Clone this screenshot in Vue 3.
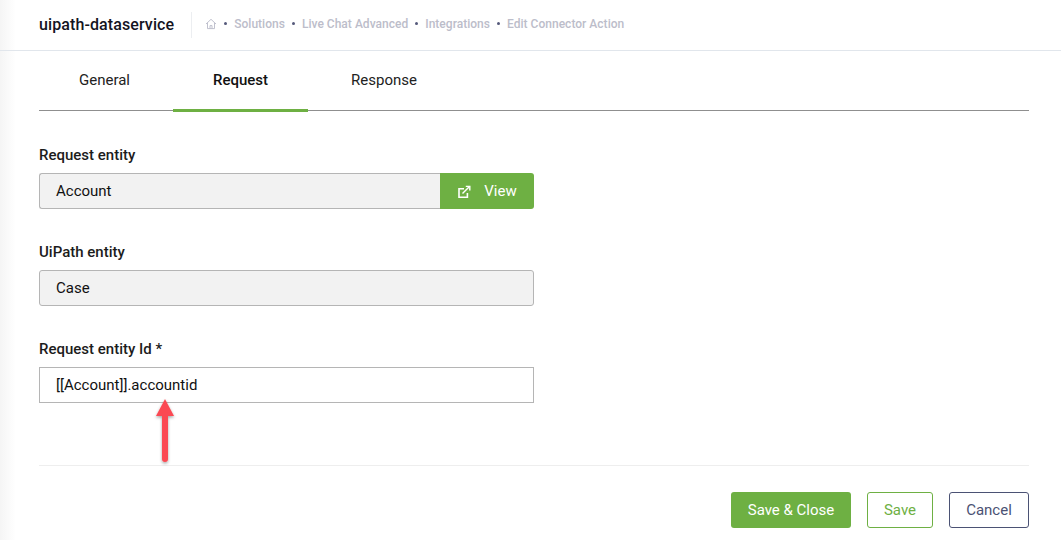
<script setup>
const crumbs = ['Solutions', 'Live Chat Advanced', 'Integrations', 'Edit Connector Action']
const tabs = ['General', 'Request', 'Response']
</script>

<template>
  <div class="page">
    <header class="topbar">
      <h1 class="app-title">uipath-dataservice</h1>
      <nav class="crumbs">
        <svg class="home" viewBox="0 0 12 12" width="12" height="12" fill="none" stroke="#b9bac8" stroke-width="0.9">
          <path d="M1 6 6 1.3 11 6" />
          <path d="M2.5 5v5.6h7V5" />
          <path d="M5 10.6V7.6h2v3" />
        </svg>
        <template v-for="crumb in crumbs" :key="crumb">
          <span class="dot"></span>
          <span class="crumb">{{ crumb }}</span>
        </template>
      </nav>
    </header>

    <main class="content">
      <div class="tabs">
        <div v-for="tab in tabs" :key="tab" :class="['tab', { active: tab === 'Request' }]">{{ tab }}</div>
      </div>

      <div class="form">
        <div class="field">
          <label>Request entity</label>
          <div class="input-group">
            <div class="input readonly joined">Account</div>
            <button type="button" class="view-btn">
              <svg viewBox="0 0 13 13" width="13" height="13" fill="none" stroke="#fff" stroke-width="1.6">
                <path d="M6 3.8H1v8.4h8.4V8" />
                <path d="M4.5 8.5 11 2" stroke-width="1.4" />
                <path d="M7.8 1.4h4v4" stroke-width="1.4" />
              </svg>
              <span>View</span>
            </button>
          </div>
        </div>
        <div class="field">
          <label>UiPath entity</label>
          <div class="input readonly">Case</div>
        </div>
        <div class="field">
          <label>Request entity Id *</label>
          <div class="input">[[Account]].accountid</div>
          <svg class="arrow" viewBox="0 0 24 72" width="24" height="72">
            <defs>
              <filter id="arrow-shadow" x="-50%" y="-20%" width="200%" height="140%">
                <feDropShadow dx="0" dy="1.5" stdDeviation="1.5" flood-color="#000" flood-opacity="0.35" />
              </filter>
            </defs>
            <g filter="url(#arrow-shadow)">
              <path d="M12 2 21 19H3Z" fill="#fb4a52" />
              <path d="M12 17V62" stroke="#fb4a52" stroke-width="6" stroke-linecap="round" />
            </g>
          </svg>
        </div>
      </div>

      <footer class="actions">
        <button type="button" class="btn primary">Save &amp; Close</button>
        <button type="button" class="btn outline">Save</button>
        <button type="button" class="btn cancel">Cancel</button>
      </footer>
    </main>
  </div>
</template>

<style>
html,
body {
  margin: 0;
  background: #fff;
}
</style>

<style scoped>
.page {
  width: 1061px;
  height: 540px;
  overflow: hidden;
  background: linear-gradient(90deg, #f5f5f5 0, #ffffff 16px);
  font-family: Roboto, "Liberation Sans", sans-serif;
  color: #222;
}

.topbar {
  display: flex;
  align-items: center;
  height: 50px;
  padding-left: 39px;
  border-bottom: 1px solid #e1e6ec;
  box-sizing: content-box;
}

.app-title {
  margin: 0;
  padding-right: 17px;
  height: 26px;
  line-height: 25px;
  border-right: 1px solid #eceef1;
  font-size: 16px;
  letter-spacing: 0.1px;
  font-weight: 500;
  color: #14141f;
}

.crumbs {
  display: flex;
  align-items: center;
  margin-left: 13px;
  margin-top: -3px;
  font-size: 12px;
  letter-spacing: 0.02px;
  font-weight: 500;
  color: #bcbdca;
}

.home {
  display: block;
}

.dot {
  width: 3px;
  height: 3px;
  margin: 0 7px;
  border-radius: 50%;
  background: #55597a;
}

.content {
  padding: 0 32px 0 39px;
}

.tabs {
  display: flex;
  gap: 3px;
  height: 59px;
  border-bottom: 1px solid #8f8f8f;
}

.tab {
  height: 59px;
  padding: 0 40px;
  line-height: 58px;
  font-size: 15px;
  color: #222;
}

.tab.active {
  height: 58px;
  font-weight: 500;
  color: #111;
  border-bottom: 3px solid #6eb043;
}

.form {
  display: flex;
  flex-direction: column;
  gap: 33px;
  width: 495px;
  padding-top: 34px;
}

.field {
  position: relative;
}

.field label {
  display: block;
  height: 20px;
  margin-bottom: 8px;
  line-height: 20px;
  font-size: 15px;
  font-weight: 500;
  color: #1c1c1c;
}

.input {
  box-sizing: border-box;
  height: 36px;
  padding: 0 16px;
  line-height: 35px;
  border: 1px solid #b5b5b5;
  font-size: 15px;
  color: #111;
  background: #fff;
}

.input.readonly {
  border-radius: 3px;
  background: #f2f2f2;
}

.input-group {
  display: flex;
}

.input.joined {
  flex: 1;
  border-right: 0;
  border-radius: 3px 0 0 3px;
}

.view-btn {
  display: flex;
  align-items: center;
  justify-content: center;
  gap: 13px;
  width: 94px;
  height: 36px;
  padding: 0 0 0 1px;
  border: 0;
  border-radius: 0 3px 3px 0;
  background: #6eb043;
  color: #fff;
  font-family: inherit;
  font-size: 15px;
}

.arrow {
  position: absolute;
  left: 114px;
  top: 58px;
}

.actions {
  display: flex;
  justify-content: flex-end;
  gap: 16px;
  height: 75px;
  margin-top: 62px;
  padding-top: 26px;
  box-sizing: border-box;
  border-top: 1px solid #eeeeee;
}

.btn {
  box-sizing: border-box;
  height: 36px;
  padding: 0;
  border-radius: 3px;
  font-family: inherit;
  font-size: 15px;
  background: #fff;
}

.primary {
  width: 120px;
  border: 0;
  background: #6eb043;
  color: #fff;
}

.outline {
  width: 66px;
  border: 1px solid #6eb043;
  color: #6eb043;
}

.cancel {
  width: 80px;
  border: 1px solid #4b5274;
  color: #4b5274;
}
</style>
